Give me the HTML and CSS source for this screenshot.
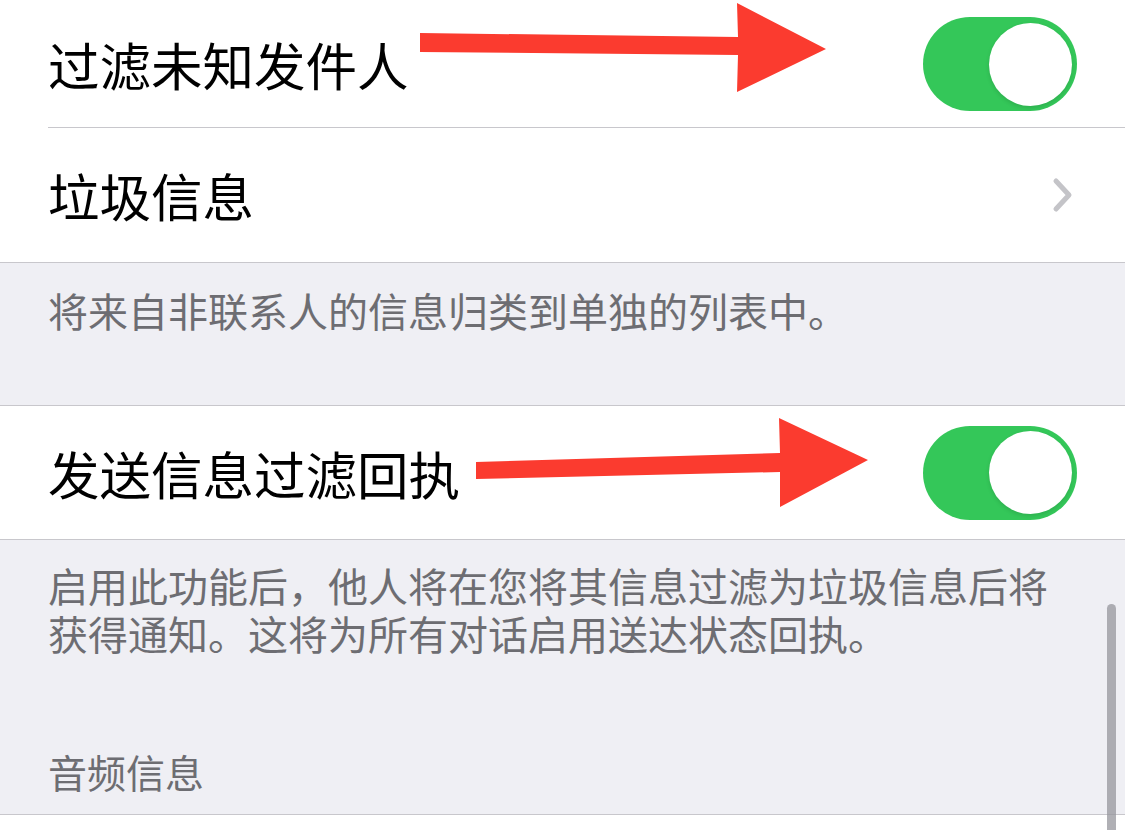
FILE: index.html
```html
<!DOCTYPE html>
<html lang="zh-CN">
<head>
<meta charset="utf-8">
<title>信息设置</title>
<link rel="stylesheet" href="styles.css">
</head>
<body>
<div class="page">
  <section class="group">
    <div class="row row-first">
      <span class="label">过滤未知发件人</span>
      <span class="switch"><span class="knob"></span></span>
    </div>
    <div class="row row-second">
      <span class="label">垃圾信息</span>
      <svg class="chevron" width="22" height="36" viewBox="0 0 22 36"><path d="M4 4 L17 18 L4 32" fill="none" stroke="#c4c4c8" stroke-width="5" stroke-linecap="round" stroke-linejoin="round"/></svg>
    </div>
  </section>
  <div class="footer footer-one">
    <p class="note">将来自非联系人的信息归类到单独的列表中。</p>
  </div>
  <section class="group">
    <div class="row row-third">
      <span class="label">发送信息过滤回执</span>
      <span class="switch"><span class="knob"></span></span>
    </div>
  </section>
  <div class="footer footer-two">
    <p class="note">启用此功能后，他人将在您将其信息过滤为垃圾信息后将</p>
    <p class="note">获得通知。这将为所有对话启用送达状态回执。</p>
    <p class="section-title">音频信息</p>
  </div>
  <div class="tail"></div>

  <svg class="arrows" width="1125" height="830" viewBox="0 0 1125 830">
    <polygon points="420,33 738,37 737,3 826,49 737,92 738,55 420,52" fill="#fb3b2f"/>
    <polygon points="476,462 780,453 779,418 868,460 780,507 780,472 476,479" fill="#fb3b2f"/>
  </svg>
  <div class="scrollbar"></div>
</div>
</body>
</html>
```

FILE: styles.css
```css
html, body {
  margin: 0;
  padding: 0;
  background: #ffffff;
}

body {
  font-family: "Noto Sans CJK SC", "Noto Sans", sans-serif;
  width: 1125px;
  height: 830px;
  overflow: hidden;
}

.page {
  position: relative;
  width: 1125px;
  height: 830px;
  background: #ffffff;
}

.group {
  background: #ffffff;
  border-bottom: 1px solid #c8c7cc;
}

.row {
  display: flex;
  align-items: center;
  justify-content: space-between;
  padding: 0 48px 0 48px;
  box-sizing: border-box;
  position: relative;
}

.row-first {
  height: 128px;
}

.row-first::after {
  content: "";
  position: absolute;
  left: 48px;
  right: 0;
  bottom: 0;
  height: 1px;
  background: #c8c7cc;
}

.row-second {
  height: 134px;
  padding-right: 51px;
}

.row-third {
  height: 133px;
}

.label {
  font-size: 51.5px;
  line-height: 60px;
  color: #000000;
}

.switch {
  display: flex;
  justify-content: flex-end;
  align-items: center;
  width: 154px;
  height: 94px;
  border-radius: 47px;
  background: #34c759;
  padding: 0 5px;
  box-sizing: border-box;
}

.knob {
  width: 83px;
  height: 83px;
  border-radius: 50%;
  background: #ffffff;
  box-shadow: 0 2px 4px rgba(0, 0, 0, 0.12);
}

.chevron {
  display: block;
}

.footer {
  background: #efeff4;
  padding: 0 48px;
  border-bottom: 1px solid #c8c7cc;
}

.footer-one {
  height: 143px;
  padding-top: 23px;
  box-sizing: border-box;
}

.footer-two {
  height: 275px;
  padding-top: 21px;
  box-sizing: border-box;
}

.note {
  margin: 0;
  font-size: 40px;
  line-height: 48px;
  color: #6d6d72;
  white-space: nowrap;
}

.section-title {
  margin: 90px 0 0 0;
  font-size: 39px;
  line-height: 48px;
  color: #6d6d72;
}

.tail {
  height: 14px;
  background: #ffffff;
}

.arrows {
  position: absolute;
  left: 0;
  top: 0;
  pointer-events: none;
}

.scrollbar {
  position: absolute;
  left: 1107px;
  top: 604px;
  width: 9px;
  height: 240px;
  border-radius: 5px;
  background: rgba(150, 150, 156, 0.75);
}
```
